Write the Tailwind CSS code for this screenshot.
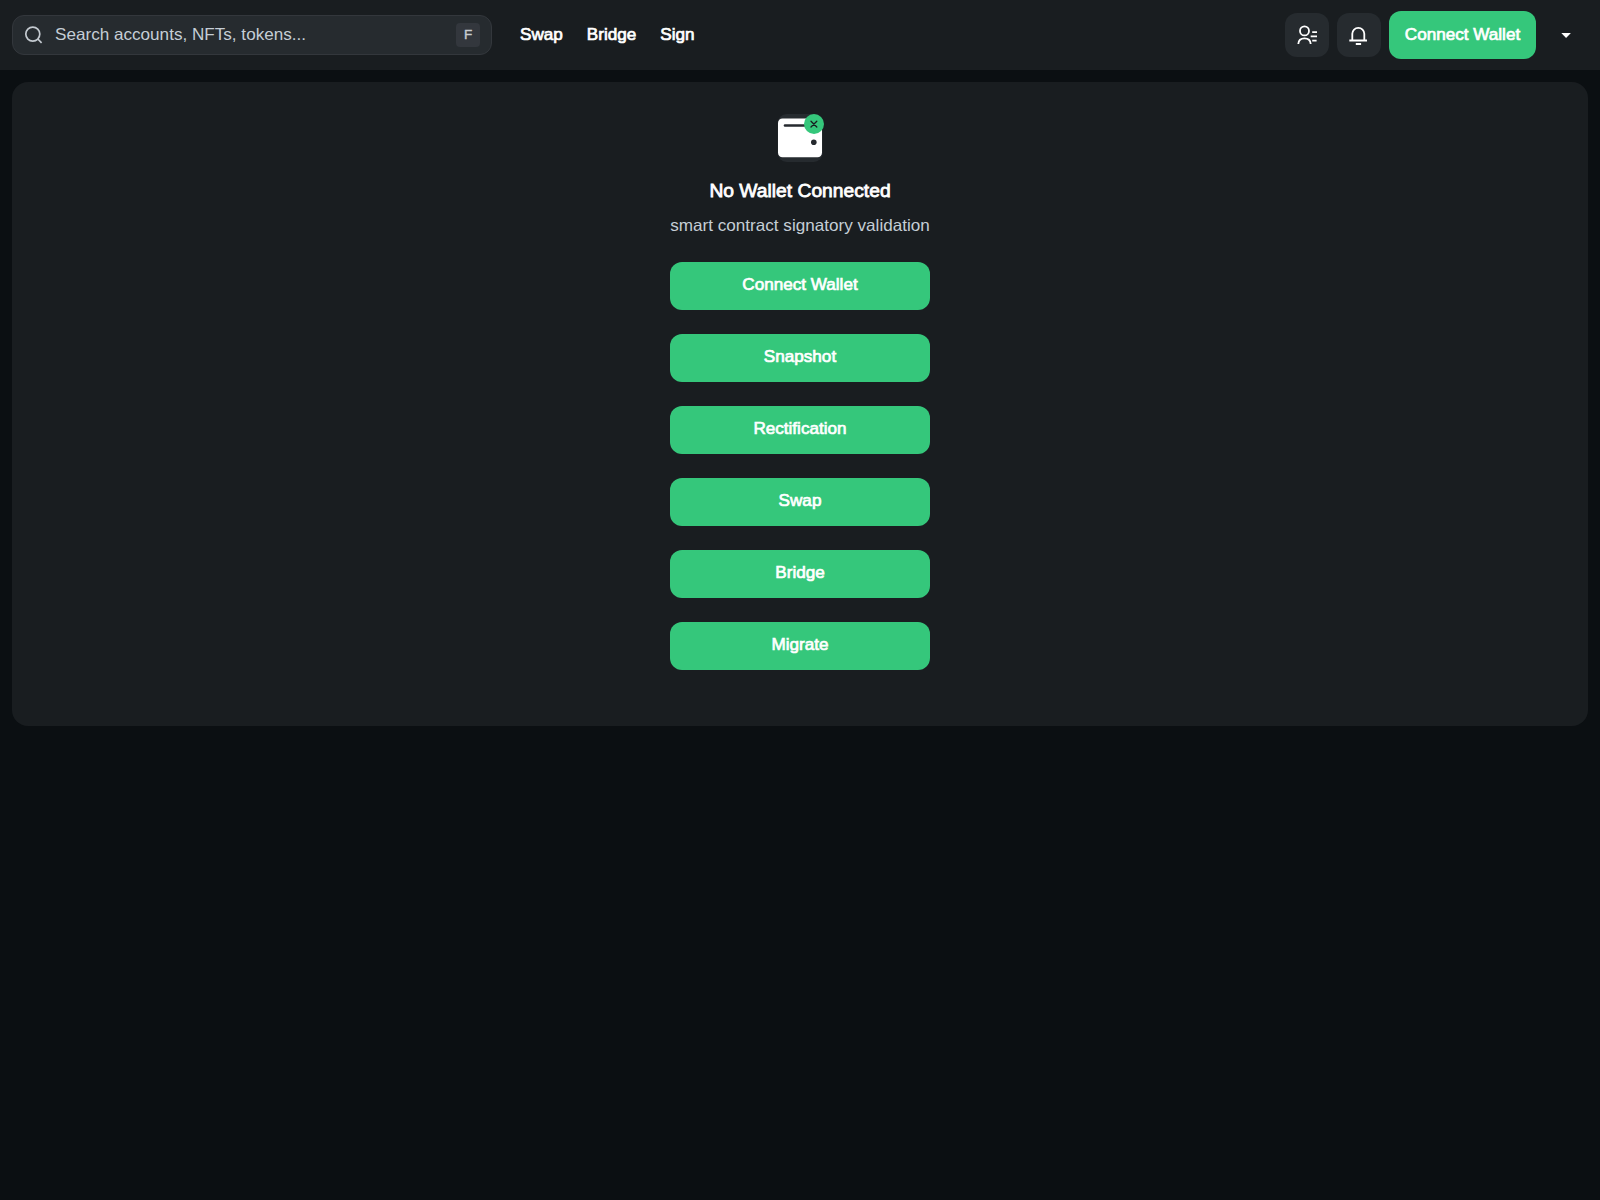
<!DOCTYPE html>
<html lang="en">
<head>
  <meta charset="UTF-8" />
  <meta name="viewport" content="width=device-width, initial-scale=1.0" />
  <title>Connect Wallet</title>
  <script src="https://cdn.jsdelivr.net/npm/@tailwindcss/browser@4"></script>
</head>
<body class="bg-[#0b0f12] min-h-screen text-white text-[17.12px] leading-6 font-['Liberation_Sans',Arial,sans-serif]">

  <!-- Top bar -->
  <header class="h-[70px] bg-[#191d20] flex items-center justify-between px-3">
    <div class="flex items-center">
      <label class="w-[480px] h-10 flex items-center rounded-xl border border-[#33373c] bg-[#262b2f] px-[11px]">
        <svg class="size-5 text-[#c4cad0]" fill="none" stroke="currentColor" stroke-width="1.7" viewBox="0 0 20 20">
          <circle cx="8.8" cy="9.1" r="7" />
          <path d="M13.8 14l3.8 3.800" />
        </svg>
        <span class="flex-1 ml-[11px] text-[#c5ced6]">Search accounts, NFTs, tokens...</span>
        <kbd class="size-6 flex items-center justify-center rounded bg-[#33373d] text-[13.5px] font-[inherit] text-[#c9cdd2] [-webkit-text-stroke:0.4px]">F</kbd>
      </label>
      <nav class="flex gap-6 ml-7 [-webkit-text-stroke:0.7px]">
        <a href="#">Swap</a>
        <a href="#">Bridge</a>
        <a href="#">Sign</a>
      </nav>
    </div>

    <div class="flex items-center gap-2">
      <button class="size-11 flex items-center justify-center rounded-xl bg-[#262b2f]">
        <svg class="size-6" fill="none" stroke="currentColor" stroke-width="1.8" viewBox="0 0 24 24">
          <circle cx="9.5" cy="7.900" r="4.500" />
          <path d="M3.300 21c.2-3.600 2.500-5.600 6.200-5.600s6 2 6.200 5.600M17.200 9.200H22M15.700 13.400H22M17.200 17.600h4.400" />
        </svg>
      </button>
      <button class="size-11 flex items-center justify-center rounded-xl bg-[#262b2f]">
        <svg class="size-6" fill="none" stroke="currentColor" stroke-width="1.8" viewBox="0 0 24 24">
          <path d="M2.300 17.500H20M5.300 17.500v-6.700a6 6 0 0 1 12 0v6.700M8.800 21h5.300" />
        </svg>
      </button>
      <button class="w-[147px] h-12 rounded-xl bg-[#35c77b] whitespace-nowrap flex items-center justify-center [-webkit-text-stroke:0.7px]">Connect Wallet</button>
      <button class="size-11 flex items-center justify-center">
        <svg class="w-[10px] h-[5px]" fill="currentColor" viewBox="0 0 10 5">
          <path d="M.3 0h9.600L5.100 5z" />
        </svg>
      </button>
    </div>
  </header>

  <!-- Wallet card -->
  <main class="mx-3 mt-3 h-[644px] rounded-2xl bg-[#191d20] flex flex-col items-center pt-8">
    <svg class="size-12" viewBox="0 0 48 48">
      <rect x="1.700" y="0" width="45" height="48" rx="9" fill="#262b2f" />
      <rect x="2" y="4.500" width="44" height="38.800" rx="4.500" fill="#fff" />
      <path d="M9 11.500h24" stroke="#262a2f" stroke-width="2.600" stroke-linecap="round" />
      <circle cx="37.800" cy="28.200" r="2.800" fill="#262a2f" />
      <circle cx="38" cy="10" r="10" fill="#35c77b" />
      <path d="M35 7.200l5.800 5.800M40.800 7.200L35 13" stroke="#191d20" stroke-width="1.300" stroke-linecap="round" />
    </svg>
    <h1 class="mt-[17px] text-[19.26px] leading-6 [-webkit-text-stroke:0.8px]">No Wallet Connected</h1>
    <p class="mt-[11px] text-[#c5ced6]">smart contract signatory validation</p>
    <div class="w-[260px] mt-6 flex flex-col gap-6 [-webkit-text-stroke:0.7px]">
      <button class="h-12 pb-[3px] rounded-xl bg-[#35c77b]">Connect Wallet</button>
      <button class="h-12 pb-[3px] rounded-xl bg-[#35c77b]">Snapshot</button>
      <button class="h-12 pb-[3px] rounded-xl bg-[#35c77b]">Rectification</button>
      <button class="h-12 pb-[3px] rounded-xl bg-[#35c77b]">Swap</button>
      <button class="h-12 pb-[3px] rounded-xl bg-[#35c77b]">Bridge</button>
      <button class="h-12 pb-[3px] rounded-xl bg-[#35c77b]">Migrate</button>
    </div>
  </main>

</body>
</html>
